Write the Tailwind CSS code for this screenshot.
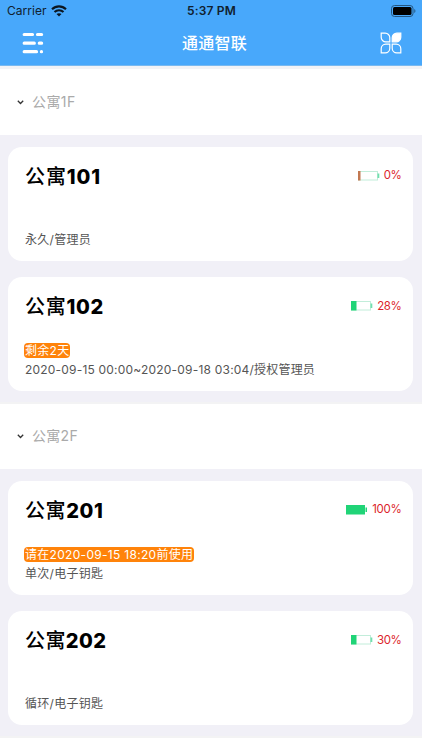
<!DOCTYPE html>
<html lang="zh-CN">
<head>
  <meta charset="UTF-8" />
  <meta name="viewport" content="width=device-width, initial-scale=1.0" />
  <title>通通智联</title>
  <script src="https://cdn.jsdelivr.net/npm/@tailwindcss/browser@4"></script>
</head>
<body class="bg-white w-[422px] h-[750px] overflow-hidden whitespace-nowrap font-[Inter,'Noto_Sans_CJK_SC',sans-serif]">

  <!-- Header -->
  <header class="h-[66px] bg-[#48a8fb] border-b border-[#79b9f0]">
    <!-- Status bar -->
    <div class="h-[22px] grid grid-cols-3 items-center pl-[7px] pr-[6px] text-[12px] leading-[22px] text-[#10202e]">
      <div class="flex items-center gap-[4px]">
        <span class="tracking-[0.05px]">Carrier</span>
        <svg class="w-[16px] h-[12px]" viewBox="0 0 16 12" fill="none" stroke="#0b1620" stroke-width="2.1">
          <path d="M1 4.3C5 .4 11 .4 15 4.3" />
          <path d="M3.5 7C6 4.6 10 4.6 12.5 7" />
          <path d="M8 11.6L5.5 9.1C7 7.8 9 7.8 10.5 9.1Z" fill="#0b1620" stroke="none" />
        </svg>
      </div>
      <span class="text-center font-semibold tracking-[0.2px]">5:37 PM</span>
      <svg class="w-[25px] h-[12px] justify-self-end -mt-px" viewBox="0 0 25 12">
        <rect x=".5" y=".5" width="21.5" height="11" rx="3" fill="none" stroke="#235681" />
        <rect x="2" y="2" width="18.5" height="8" rx="1.5" fill="#000" />
        <path d="M23.3 4V8C24.8 7.4 24.8 4.6 23.3 4Z" fill="#235681" />
      </svg>
    </div>
    <!-- Nav bar -->
    <div class="h-[41px] flex items-center justify-between pl-[22px] pr-[20px]">
      <svg class="w-[22px] h-[22px]" viewBox="0 0 22 22" stroke="#fff" stroke-width="3.2" stroke-linecap="round">
        <path d="M2.2 2.5H10.5M15.5 2.5H19.6M2.2 11.2H12.3M17.3 11.2H19.6M2.2 19.7H14.5M19.4 19.7H19.5" />
      </svg>
      <h1 class="pl-[5px] text-[16px] font-medium text-white tracking-[0.2px]">通通智联</h1>
      <svg class="w-[22px] h-[22px]" viewBox="0 0 22 22" fill="none" stroke="#fff" stroke-width="1.2">
        <path d="M1.2 1.2H5.2A4.6 4.6 0 0 1 9.8 5.8V9.8H5.8A4.6 4.6 0 0 1 1.2 5.2Z" />
        <path d="M20.8 1.2H16.8A4.6 4.6 0 0 0 12.2 5.8V9.8H16.2A4.6 4.6 0 0 0 20.8 5.2Z" fill="#fff" />
        <path d="M1.2 20.8H5.2A4.6 4.6 0 0 0 9.8 16.2V12.2H5.8A4.6 4.6 0 0 0 1.2 16.8Z" />
        <path d="M20.8 20.8H16.8A4.6 4.6 0 0 1 12.2 16.2V12.2H16.2A4.6 4.6 0 0 1 20.8 16.8Z" />
      </svg>
    </div>
  </header>

  <main class="pt-[3px] bg-[#f3f3f6]">
    <!-- 1F -->
    <section>
      <div class="h-[66px] bg-white flex items-center pl-[17px] gap-[8px]">
        <svg class="w-[7px] h-[5px]" viewBox="0 0 7 5" fill="none" stroke="#333" stroke-width="1.3"><path d="M.8 .8L3.5 3.5L6.2 .8" /></svg>
        <h2 class="pb-px text-[14px] text-[#aaa] tracking-[0.4px]">公寓1F</h2>
      </div>
      <div class="h-[269px] bg-[#f1f0f7] border-b-2 border-[#f3f3f4] pt-[12px] pl-[8.4px] pr-[8.6px] flex flex-col gap-[16px]">
        <article class="h-[114px] bg-white rounded-[14px] pt-[14px] pb-[12px] pl-[16.6px] pr-[12px] flex flex-col justify-between">
          <div class="h-[30px] flex items-center justify-between">
            <h3 class="pt-px text-[20px] font-extrabold text-black tracking-[0.9px]"><span class="font-medium">公寓</span>101</h3>
            <div class="flex items-center gap-[4px] text-[11.5px] text-[#dc1f2d]">
              <svg class="w-[22px] h-[10px]" viewBox="0 0 22 10">
                <rect x=".5" y=".5" width="19" height="8.5" fill="#fff" stroke="#c2edda" />
                <rect x="0" y="0" width="2.5" height="9.5" fill="#c27852" />
                <rect x="19.5" y="2.5" width="1.8" height="4.5" fill="#72dfae" />
              </svg>
              <span class="tracking-[-0.5px]">0%</span>
            </div>
          </div>
          <p class="text-[12px] leading-[19px] text-[#555] tracking-[0.3px]">永久/管理员</p>
        </article>
        <article class="h-[114px] bg-white rounded-[14px] pt-[14px] pb-[12px] pl-[16.6px] pr-[12px] flex flex-col justify-between">
          <div class="h-[30px] flex items-center justify-between">
            <h3 class="pt-px text-[20px] font-extrabold text-black tracking-[0.7px]"><span class="font-medium">公寓</span>102</h3>
            <div class="flex items-center gap-[4px] text-[11.5px] text-[#dc1f2d]">
              <svg class="w-[22px] h-[10px]" viewBox="0 0 22 10">
                <rect x=".5" y=".5" width="19" height="8.5" fill="#fff" stroke="#c2edda" />
                <rect x="0" y="0" width="5.5" height="9.5" fill="#20d477" />
                <rect x="19.5" y="2.5" width="1.8" height="4.5" fill="#72dfae" />
              </svg>
              <span class="pt-px tracking-[-0.4px]">28%</span>
            </div>
          </div>
          <div class="flex flex-col items-start text-[12px] tracking-[0.3px]">
            <span class="h-[15px] mb-[2px] -ml-[0.5px] px-[0.5px] rounded-[4px] bg-[#ff830a] text-white leading-[15px]">剩余2天</span>
            <p class="leading-[19px] text-[#555] tracking-[0.2px]">2020-09-15 00:00~2020-09-18 03:04/授权管理员</p>
          </div>
        </article>
      </div>
    </section>

    <!-- 2F -->
    <section>
      <div class="h-[65px] bg-white flex items-center pl-[17px] gap-[8px]">
        <svg class="w-[7px] h-[5px]" viewBox="0 0 7 5" fill="none" stroke="#333" stroke-width="1.3"><path d="M.8 .8L3.5 3.5L6.2 .8" /></svg>
        <h2 class="pb-[2px] text-[14px] text-[#aaa] tracking-[0.3px]">公寓2F</h2>
      </div>
      <div class="h-[269px] bg-[#f1f0f7] border-b-2 border-[#f3f3f4] pt-[12px] pl-[8.4px] pr-[8.6px] flex flex-col gap-[16px]">
        <article class="h-[114px] bg-white rounded-[14px] pt-[14px] pb-[12px] pl-[16.6px] pr-[12px] flex flex-col justify-between">
          <div class="h-[30px] flex items-center justify-between">
            <h3 class="pt-px text-[20px] font-extrabold text-black tracking-[0.6px]"><span class="font-medium">公寓</span>201</h3>
            <div class="flex items-center gap-[4px] text-[11.5px] text-[#dc1f2d]">
              <svg class="w-[22px] h-[10px]" viewBox="0 0 22 10">
                <rect x="0" y="0" width="19" height="9.5" fill="#20d477" />
                <rect x="19.5" y="2.5" width="1.5" height="4.5" fill="#20d477" />
              </svg>
              <span class="tracking-[-0.3px]">100%</span>
            </div>
          </div>
          <div class="flex flex-col items-start text-[12px] tracking-[0.3px]">
            <span class="h-[15px] mb-[2px] -ml-[0.5px] px-[0.5px] rounded-[4px] bg-[#ff830a] text-white leading-[15px]">请在2020-09-15 18:20前使用</span>
            <p class="leading-[19px] text-[#555]">单次/电子钥匙</p>
          </div>
        </article>
        <article class="h-[114px] bg-white rounded-[14px] pt-[14px] pb-[12px] pl-[16.6px] pr-[12px] flex flex-col justify-between">
          <div class="h-[30px] flex items-center justify-between">
            <h3 class="pt-px text-[20px] font-extrabold text-black tracking-[0.4px]"><span class="font-medium">公寓</span>202</h3>
            <div class="flex items-center gap-[4px] text-[11.5px] text-[#dc1f2d]">
              <svg class="w-[22px] h-[10px]" viewBox="0 0 22 10">
                <rect x=".5" y=".5" width="19" height="8.5" fill="#fff" stroke="#c2edda" />
                <rect x="0" y="0" width="5.5" height="9.5" fill="#20d477" />
                <rect x="19.5" y="2.5" width="1.8" height="4.5" fill="#72dfae" />
              </svg>
              <span class="pt-px tracking-[-0.4px]">30%</span>
            </div>
          </div>
          <p class="text-[12px] leading-[19px] text-[#555] tracking-[0.3px]">循环/电子钥匙</p>
        </article>
      </div>
    </section>
  </main>
</body>
</html>
